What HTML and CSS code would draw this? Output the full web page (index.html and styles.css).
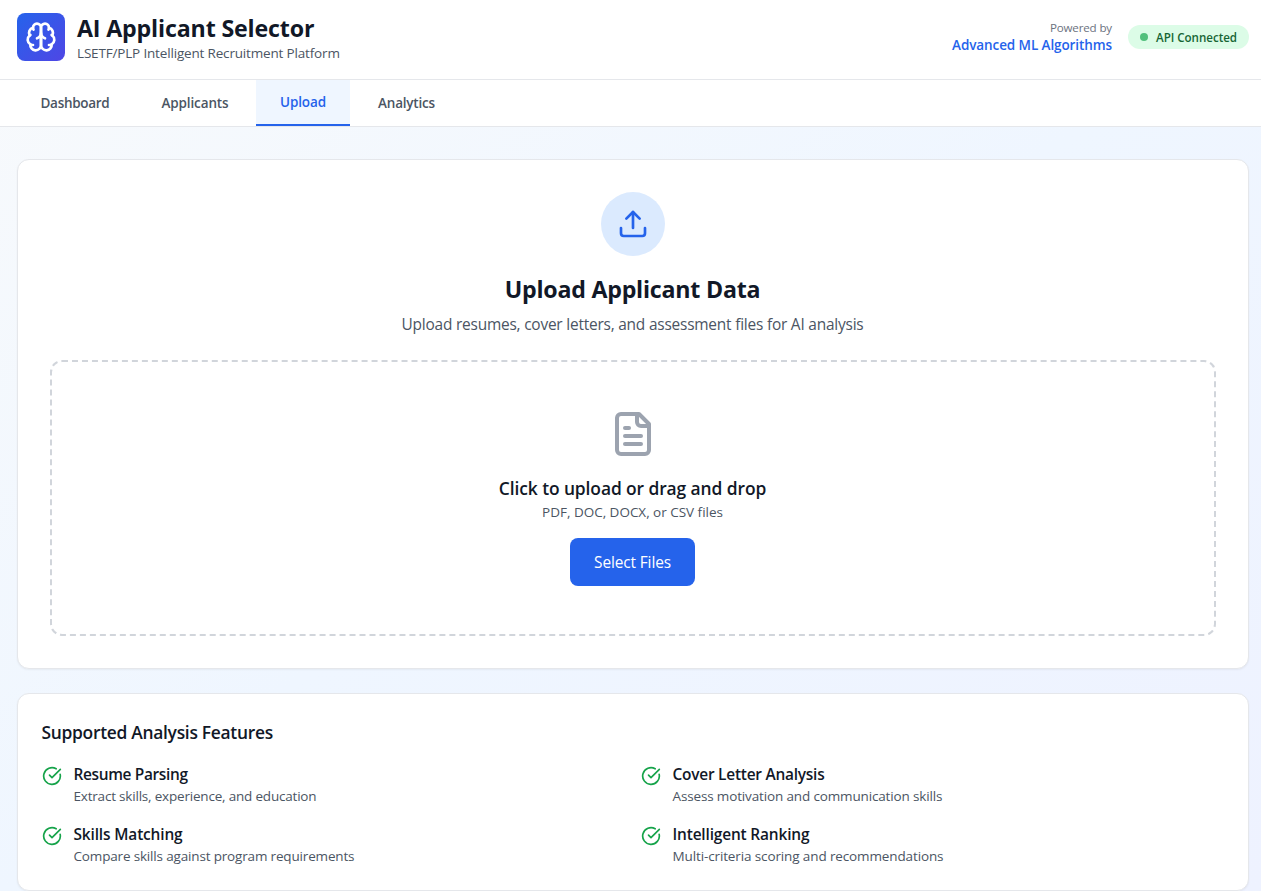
FILE: index.html
```
<!DOCTYPE html>
<html lang="en">
<head>
<meta charset="utf-8">
<title>AI Applicant Selector</title>
<link rel="stylesheet" href="styles.css">
</head>
<body>
<div class="page">
  <header class="header">
    <div class="brand">
      <div class="logo">
        <svg class="icon" width="32" height="32" viewBox="0 0 24 24">
          <path d="M12 5a3 3 0 1 0-5.997.125 4 4 0 0 0-2.526 5.77 4 4 0 0 0 .556 6.588A4 4 0 1 0 12 18Z"/>
          <path d="M12 5a3 3 0 1 1 5.997.125 4 4 0 0 1 2.526 5.77 4 4 0 0 1-.556 6.588A4 4 0 1 1 12 18Z"/>
          <path d="M15 13a4.5 4.5 0 0 1-3-4 4.5 4.5 0 0 1-3 4"/>
          <path d="M17.599 6.5a3 3 0 0 0 .399-1.375"/>
          <path d="M6.003 5.125A3 3 0 0 0 6.401 6.5"/>
          <path d="M3.477 10.896a4 4 0 0 1 .585-.396"/>
          <path d="M19.938 10.5a4 4 0 0 1 .585.396"/>
          <path d="M6 18a4 4 0 0 1-1.967-.516"/>
          <path d="M19.967 17.484A4 4 0 0 1 18 18"/>
        </svg>
      </div>
      <div>
        <h1 class="brand-title">AI Applicant Selector</h1>
        <p class="brand-sub">LSETF/PLP Intelligent Recruitment Platform</p>
      </div>
    </div>
    <div class="status">
      <div class="powered">
        <p class="powered-label">Powered by</p>
        <p class="powered-name">Advanced ML Algorithms</p>
      </div>
      <div class="pill"><span class="dot"></span><span class="pill-text">API Connected</span></div>
    </div>
  </header>

  <nav class="nav">
    <button class="tab tab-dashboard">Dashboard</button>
    <button class="tab tab-applicants">Applicants</button>
    <button class="tab tab-upload active">Upload</button>
    <button class="tab tab-analytics">Analytics</button>
  </nav>

  <main class="main">
    <section class="card upload-card">
      <div class="upload-badge">
        <svg class="icon" width="32" height="32" viewBox="0 0 24 24">
          <path d="M21 15v4a2 2 0 0 1-2 2H5a2 2 0 0 1-2-2v-4"/>
          <path d="M17 8l-5-5-5 5"/>
          <path d="M12 3v12"/>
        </svg>
      </div>
      <h2 class="upload-title">Upload Applicant Data</h2>
      <p class="upload-sub">Upload resumes, cover letters, and assessment files for AI analysis</p>
      <div class="dropzone">
        <svg class="icon doc" width="48" height="48" viewBox="0 0 24 24">
          <path d="M15 2H6a2 2 0 0 0-2 2v16a2 2 0 0 0 2 2h12a2 2 0 0 0 2-2V7Z"/>
          <path d="M14 2v4a2 2 0 0 0 2 2h4"/>
          <path d="M10 9H8"/>
          <path d="M16 13H8"/>
          <path d="M16 17H8"/>
        </svg>
        <p class="drop-title">Click to upload or drag and drop</p>
        <p class="drop-sub">PDF, DOC, DOCX, or CSV files</p>
        <button class="select">Select Files</button>
      </div>
    </section>

    <section class="card features">
      <h3 class="features-title">Supported Analysis Features</h3>
      <div class="grid">
        <div class="feature resume">
          <svg class="icon check" width="20" height="20" viewBox="0 0 24 24"><path d="M21.801 10A10 10 0 1 1 17 3.335"/><path d="m9 11 3 3L22 4"/></svg>
          <div><h4>Resume Parsing</h4><p>Extract skills, experience, and education</p></div>
        </div>
        <div class="feature cover">
          <svg class="icon check" width="20" height="20" viewBox="0 0 24 24"><path d="M21.801 10A10 10 0 1 1 17 3.335"/><path d="m9 11 3 3L22 4"/></svg>
          <div><h4>Cover Letter Analysis</h4><p>Assess motivation and communication skills</p></div>
        </div>
        <div class="feature skills">
          <svg class="icon check" width="20" height="20" viewBox="0 0 24 24"><path d="M21.801 10A10 10 0 1 1 17 3.335"/><path d="m9 11 3 3L22 4"/></svg>
          <div><h4>Skills Matching</h4><p>Compare skills against program requirements</p></div>
        </div>
        <div class="feature ranking">
          <svg class="icon check" width="20" height="20" viewBox="0 0 24 24"><path d="M21.801 10A10 10 0 1 1 17 3.335"/><path d="m9 11 3 3L22 4"/></svg>
          <div><h4>Intelligent Ranking</h4><p>Multi-criteria scoring and recommendations</p></div>
        </div>
      </div>
    </section>
  </main>
</div>
</body>
</html>
```

FILE: styles.css
```
* { box-sizing: border-box; margin: 0; padding: 0; }
html, body { height: 891px; overflow: hidden; }
body { font-family: "Segoe UI", "Open Sans", "Noto Sans", sans-serif; color: #111827; }
button { font: inherit; border: 0; background: none; }
.icon { display: block; fill: none; stroke: currentColor; stroke-width: 2; stroke-linecap: round; stroke-linejoin: round; flex: none; }

.page { min-height: 891px; background: linear-gradient(to bottom right, #f8fafc, #eff6ff 50%, #eef2ff); }

.header { height: 80px; padding: 11px 12px 16px 17px; display: flex; justify-content: space-between; align-items: center; background: #fff; border-bottom: 1px solid #e5e7eb; }
.brand { display: flex; align-items: center; gap: 12px; }
.logo { width: 48px; height: 48px; padding: 8px; border-radius: 8px; color: #fff; background: linear-gradient(to bottom right, #2563eb, #4f46e5); }
.brand-title { padding-top: 1px; height: 32px; font-size: 23.2px; line-height: 32px; font-weight: 700; letter-spacing: -.157px; }
.brand-sub { font-size: 13.5px; line-height: 20px; color: #4b5563; letter-spacing: -.17px; }
.status { display: flex; align-items: center; gap: 16px; }
.powered { text-align: right; }
.powered-label { padding-top: 1px; height: 16px; font-size: 11.6px; line-height: 16px; color: #6b7280; letter-spacing: -.16px; }
.powered-name { font-size: 13.5px; line-height: 20px; font-weight: 600; color: #2563eb; letter-spacing: -.095px; }
.pill { width: 121px; height: 24px; padding: 0 12px; display: flex; align-items: center; gap: 8px; border-radius: 12px; background: #dcfce7; color: #166534; font-size: 11.6px; line-height: 16px; font-weight: 600; letter-spacing: -.03px; white-space: nowrap; }
.pill-text { padding-top: 2px; }
.dot { width: 8px; height: 8px; border-radius: 50%; background: #53c07d; flex: none; }

.nav { height: 47px; padding-left: 17px; display: flex; gap: 4px; background: #fff; border-bottom: 1px solid #e5e7eb; }
.tab { height: 46px; font-size: 13.5px; line-height: 20px; font-weight: 600; color: #4b5563; white-space: nowrap; }
.tab-dashboard { width: 117px; padding-right: 1px; letter-spacing: -.29px; }
.tab-applicants { width: 114px; letter-spacing: -.13px; }
.tab-upload { width: 94px; letter-spacing: -.12px; }
.tab-analytics { width: 105px; letter-spacing: -.2px; }
.tab.active { color: #2563eb; background: #eff6ff; border-bottom: 2px solid #2563eb; }

.main { padding: 32px 12px 0 17px; display: flex; flex-direction: column; gap: 24px; }
.card { background: #fff; border: 1px solid #e5e7eb; border-radius: 12px; box-shadow: 0 1px 2px rgba(0, 0, 0, .05); }

.upload-card { padding: 32px; display: flex; flex-direction: column; align-items: center; text-align: center; }
.upload-badge { width: 64px; height: 64px; padding: 16px; border-radius: 50%; background: #dbeafe; color: #2563eb; }
.upload-title { margin-top: 17px; padding-right: 1px; font-size: 23.2px; line-height: 32px; font-weight: 700; letter-spacing: -.225px; }
.upload-sub { margin-top: 7px; padding-right: 1px; font-size: 15.44px; line-height: 24px; color: #4b5563; letter-spacing: -.213px; }
.dropzone { align-self: stretch; margin-top: 24px; height: 276px; padding: 48px; display: flex; flex-direction: column; align-items: center; border: 2px dashed #d1d5db; border-radius: 12px; }
.doc { color: #9ca3af; }
.drop-title { margin-top: 16px; padding-right: 1px; font-size: 17.4px; line-height: 28px; font-weight: 600; letter-spacing: -.085px; }
.drop-sub { padding-right: 1px; font-size: 13.5px; line-height: 20px; color: #4b5563; letter-spacing: -.015px; }
.select { margin: 16px 1px 0 0; width: 125px; height: 48px; border-radius: 8px; background: #2563eb; color: #fff; font-size: 15.44px; line-height: 24px; letter-spacing: -.125px; }

.features { padding: 24px; }
.features-title { margin-left: -.5px; font-size: 17.4px; line-height: 28px; font-weight: 600; letter-spacing: -.285px; }
.grid { margin-top: 16px; display: grid; grid-template-columns: 1fr 1fr; gap: 16px; }
.feature { display: flex; gap: 11.5px; }
.check { margin-top: 4px; color: #16a34a; }
.feature h4 { font-size: 15.44px; line-height: 24px; font-weight: 600; }
.feature p { font-size: 13.5px; line-height: 20px; color: #4b5563; }
.resume h4 { letter-spacing: -.35px; }
.resume p { letter-spacing: -.197px; }
.cover h4 { letter-spacing: -.238px; }
.cover p { letter-spacing: -.147px; }
.skills h4 { letter-spacing: -.145px; }
.skills p { letter-spacing: -.165px; }
.ranking h4 { letter-spacing: -.163px; }
.ranking p { letter-spacing: -.123px; }
```
